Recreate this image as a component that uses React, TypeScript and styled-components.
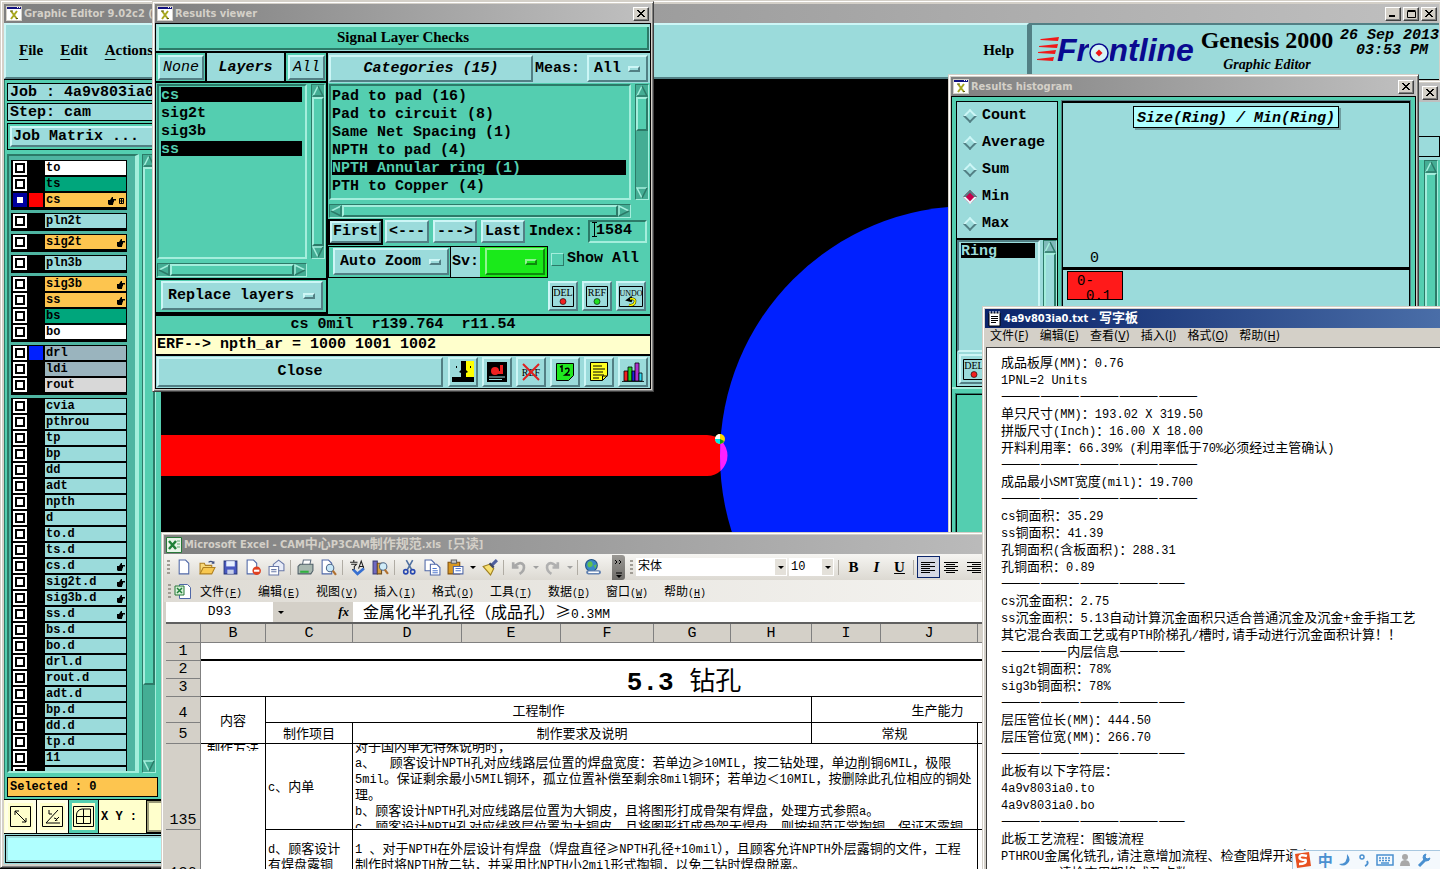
import React from "react";
import styled, { createGlobalStyle, css } from "styled-components";

const c = {
  teal: "#54ceb0",
  tealHi: "#a4eedc",
  tealLo: "#2c7a68",
  cyan: "#9bdbdb",
  cyanHi: "#cdf6f6",
  cyanLo: "#527f84",
  cream: "#ffffcc",
  orange: "#fdc54f",
  face: "#d4d0c8",
};

const mono = `"Liberation Mono", monospace`;
const serif = `"Liberation Serif", serif`;
const cjk = `"Noto Sans CJK SC", sans-serif`;
const title = `"DejaVu Sans Condensed", "DejaVu Sans", "Noto Sans CJK SC", sans-serif`;

const raisedTeal = css`
  border: 2px solid;
  border-color: ${c.tealHi} ${c.tealLo} ${c.tealLo} ${c.tealHi};
`;
const sunkenTeal = css`
  border: 2px solid;
  border-color: ${c.tealLo} ${c.tealHi} ${c.tealHi} ${c.tealLo};
`;
const raisedCyan = css`
  border: 2px solid;
  border-color: ${c.cyanHi} ${c.cyanLo} ${c.cyanLo} ${c.cyanHi};
`;

const Global = createGlobalStyle`
  *, *::before, *::after { box-sizing: border-box; }
  html, body { margin: 0; padding: 0; background: #000; }
  button, input, select, textarea { font: inherit; color: inherit; margin: 0; padding: 0; border-radius: 0; }
  button { white-space: nowrap; }
  a { color: inherit; text-decoration: none; }
`;

const Desktop = styled.main`
  position: relative;
  width: 100%;
  height: 100vh;
  overflow: hidden;
  background: #000;
  color: #000;
  font: bold 15px/18px ${mono};
`;

/* ---------- window chrome ---------- */

const Frame = styled.section<{ $l?: number; $t?: number; $r?: number; $b?: number; $w?: number; $h?: number; $pad?: number }>`
  position: absolute;
  left: ${(p) => (p.$l === undefined ? "auto" : p.$l + "px")};
  top: ${(p) => p.$t ?? 0}px;
  right: ${(p) => (p.$r === undefined ? "auto" : p.$r + "px")};
  bottom: ${(p) => (p.$b === undefined ? "auto" : p.$b + "px")};
  width: ${(p) => (p.$w ? p.$w + "px" : "auto")};
  height: ${(p) => (p.$h ? p.$h + "px" : "auto")};
  display: flex;
  flex-direction: column;
  padding: ${(p) => p.$pad ?? 2}px;
  background: ${c.face};
  border: 1px solid;
  border-color: ${c.face} #404040 #404040 ${c.face};
  box-shadow: inset 1px 1px #fff, inset -1px -1px #808080;
  overflow: hidden;
`;

const TitleBar = styled.header<{ $active?: boolean }>`
  flex: none;
  display: flex;
  align-items: center;
  gap: 2px;
  height: 19px;
  padding: 0 2px;
  background: ${(p) =>
    p.$active ? "linear-gradient(90deg, #0a246a, #4a6ea8)" : "linear-gradient(90deg, #808080, #c0c0c0)"};
  color: ${(p) => (p.$active ? "#fff" : c.face)};
  font: bold 11px/18px ${title};
  white-space: nowrap;
`;

const TitleText = styled.h2`
  flex: 1;
  margin: 0;
  font: inherit;
  overflow: hidden;
  & > span { font: bold 13px/0 ${cjk}; }
`;

const CaptionButton = styled.button`
  flex: none;
  display: flex;
  align-items: center;
  justify-content: center;
  width: 16px;
  height: 14px;
  background: ${c.face};
  border: 1px solid;
  border-color: #fff #404040 #404040 #fff;
  box-shadow: inset -1px -1px #808080;
`;

const XGlyph = () => (
  <svg width="8" height="7" viewBox="0 0 8 7" aria-hidden>
    <path d="M0 0h2v1h1v1h2V1h1V0h2v1H7v1H6v1H5v1h1v1h1v1h1v1H6V6H5V5H3v1H2v1H0V6h1V5h1V4h1V3H2V2H1V1H0z" fill="#000" />
  </svg>
);

const AppIcon = () => (
  <svg width="16" height="15" viewBox="0 0 16 15" aria-hidden>
    <path d="M0 0h16v15H0z" fill="#d4d0c8" />
    <path d="M1 3h14v11H1z" fill="#fff" />
    <path d="M1 1h14v2H1z" fill="#101080" />
    <path d="M11 1h1v1h-1zm2 0h1v1h-1z" fill="#fff" />
    <path d="M5 5l6 8M11 5l-6 8" stroke="#a8a820" strokeWidth="2" />
    <path d="M4 5h3M10 12.500h2" stroke="#606010" />
  </svg>
);

/* ---------- motif parts ---------- */

const MotifButton = styled.button<{ $slant?: boolean; $plain?: boolean; $grow?: boolean; $focus?: boolean }>`
  ${raisedCyan}
  flex: ${(p) => (p.$grow ? "1" : "none")};
  display: flex;
  align-items: center;
  justify-content: center;
  padding: 0 3px;
  background: ${c.cyan};
  font-style: ${(p) => (p.$slant ? "italic" : "normal")};
  font-weight: ${(p) => (p.$plain ? "normal" : "bold")};
  outline: ${(p) => (p.$focus ? "2px solid #000" : "none")};
  outline-offset: 0;
`;

const OptionFrame = styled.span<{ $green?: boolean; $w: number }>`
  ${raisedCyan}
  flex: none;
  display: flex;
  align-items: center;
  width: ${(p) => p.$w}px;
  padding: 0 6px 0 5px;
  background: ${(p) => (p.$green ? "#1aea1a" : c.cyan)};
  ${(p) => p.$green && "border-color: #8ff58f #0d8a0d #0d8a0d #8ff58f;"}
`;
const OptionSelect = styled.select`
  flex: 1;
  min-width: 0;
  appearance: none;
  border: 0;
  background: transparent;
  outline: none;
  font: bold 15px/18px ${mono};
`;
const Knob = styled.span<{ $green?: boolean }>`
  ${raisedCyan}
  flex: none;
  width: 12px;
  height: 6px;
  ${(p) => p.$green && "border-color: #8ff58f #0d8a0d #0d8a0d #8ff58f;"}
`;

function OptionMenu({ label, value, width, green }: { label: string; value: string; width: number; green?: boolean }) {
  return (
    <OptionFrame $w={width} $green={green}>
      <OptionSelect aria-label={label} defaultValue={value}>
        <option>{value}</option>
      </OptionSelect>
      <Knob $green={green} />
    </OptionFrame>
  );
}

const Track = styled.div<{ $h?: boolean; $cyan?: boolean }>`
  flex: none;
  display: flex;
  flex-direction: ${(p) => (p.$h ? "row" : "column")};
  ${(p) => (p.$h ? "height: 14px;" : "width: 14px;")}
  ${sunkenTeal}
  border-width: 1px;
  background: ${(p) => (p.$cyan ? "#7fb9bb" : "#44ad94")};
`;
const Thumb = styled.span<{ $cyan?: boolean; $size?: string }>`
  ${raisedTeal}
  flex: ${(p) => (p.$size ? `0 0 ${p.$size}` : "1")};
  background: ${(p) => (p.$cyan ? c.cyan : c.teal)};
`;
const Spacer = styled.span`
  flex: 1;
`;

const arrowPaths: Record<string, [string, string]> = {
  up: ["M6 1L1 11", "M6 1l5 10H1"],
  down: ["M11 1H1l5 10", "M6 11l5-10"],
  left: ["M11 1L1 6", "M1 6l10 5V1"],
  right: ["M1 11V1l10 5", "M11 6L1 11"],
};
function Arrow({ dir }: { dir: "up" | "down" | "left" | "right" }) {
  const [hi, lo] = arrowPaths[dir];
  return (
    <svg width="12" height="12" viewBox="0 0 12 12" fill="none" aria-hidden>
      <path d={hi} stroke={c.tealHi} strokeWidth="1.500" />
      <path d={lo} stroke={c.tealLo} strokeWidth="1.500" />
    </svg>
  );
}
function Scroll({ h, size, cyan }: { h?: boolean; size?: string; cyan?: boolean }) {
  return (
    <Track $h={h} $cyan={cyan}>
      <Arrow dir={h ? "left" : "up"} />
      <Thumb $size={size} $cyan={cyan} />
      {size && <Spacer />}
      <Arrow dir={h ? "right" : "down"} />
    </Track>
  );
}

/* ---------- editor main window ---------- */

const MenuRow = styled.div`
  flex: none;
  display: flex;
  height: 57px;
  background: ${c.cyan};
  border-bottom: 1px solid #000;
`;
const MenuBar = styled.nav`
  ${raisedCyan}
  flex: 1;
  display: flex;
  align-items: center;
  gap: 17px;
  padding: 0 13px 2px;
  background: ${c.cyan};
  font: bold 15px/18px ${serif};
  & u { text-underline-offset: 4px; }
`;
const MenuLink = styled.a`
  white-space: nowrap;
`;
const HelpLink = styled.a`
  margin-left: auto;
`;
const Brand = styled.div`
  flex: 0 0 410px;
  display: flex;
  align-items: flex-start;
  border-left: 3px solid ${c.cyanLo};
  border-top: 2px solid ${c.cyanLo};
  padding: 0 0 0 5px;
  & > svg { flex: none; margin-top: 4px; }
`;
const Product = styled.div`
  flex: none;
  width: 136px;
  text-align: center;
  font: bold 24px/30px ${serif};
  white-space: nowrap;
`;
const ProductSub = styled.div`
  font: italic bold 14px/20px ${serif};
`;
const Clock = styled.div`
  flex: none;
  width: 99px;
  margin-left: 5px;
  font: italic bold 15px/15px ${mono};
  text-align: right;
  white-space: nowrap;
  padding-top: 3px;
  & > span { display: block; padding-right: 11px; }
`;

const EditorBody = styled.div`
  flex: 1;
  min-height: 0;
  display: flex;
  background: #000;
`;
const Side = styled.aside`
  flex: 0 0 157px;
  display: flex;
  flex-direction: column;
  gap: 2px;
  padding: 3px 3px 2px 2px;
  background: ${c.teal};
  border-left: 1px solid ${c.tealLo};
  overflow: hidden;
`;
const InfoBox = styled.div<{ $orange?: boolean }>`
  flex: none;
  height: ${(p) => (p.$orange ? 20 : 18)}px;
  padding-left: 2px;
  border: 1px solid #000;
  background: ${(p) => (p.$orange ? c.orange : c.cyan)};
  font: bold ${(p) => (p.$orange ? "12px/18px" : "15px/17px")} ${mono};
  white-space: nowrap;
  overflow: hidden;
`;
const MatrixBox = styled.div`
  flex: none;
  display: flex;
  height: 27px;
  padding: 2px;
  border: 1px solid #000;
  & > button { justify-content: flex-start; padding: 0 1px; }
`;
const LayerArea = styled.div`
  flex: 1;
  min-height: 0;
  display: flex;
  gap: 3px;
  margin: 2px 0;
`;
const LayerPane = styled.ul`
  flex: none;
  display: flex;
  flex-direction: column;
  gap: 3px;
  width: 132px;
  height: 100%;
  margin: 0;
  padding: 4px 8px 0 2px;
  list-style: none;
  background: #4fb5a2;
  ${sunkenTeal}
  border-right-width: 4px;
  overflow: hidden;
`;
const LayerGroup = styled.li`
  flex: none;
  display: flex;
  flex-direction: column;
  gap: 2px;
  padding: 1px 1px 3px 2px;
  background: #000;
`;
const LayerRow = styled.label`
  display: flex;
  align-items: center;
  gap: 2px;
  height: 14px;
`;
const LayerCheck = styled.input`
  appearance: none;
  flex: none;
  width: 14px;
  height: 14px;
  background: #fff;
  border: 2px solid #fff;
  box-shadow: inset 0 0 0 2px #000;
  &:checked { border-color: #0000a0; box-shadow: inset 0 0 0 2px #0000a0; }
`;
const Swatch = styled.span<{ $color: string }>`
  flex: none;
  width: 14px;
  height: 14px;
  background: ${(p) => p.$color};
`;
const LayerName = styled.span<{ $color: string }>`
  flex: 1;
  display: flex;
  align-items: center;
  justify-content: space-between;
  height: 14px;
  padding: 0 1px;
  background: ${(p) => p.$color};
  font: bold 12px/14px ${mono};
`;

const Hand = ({ grid }: { grid?: boolean }) => (
  <svg width={grid ? 18 : 9} height="9" viewBox={grid ? "0 0 18 9" : "0 0 9 9"} aria-hidden>
    <path d="M1 4h2l2-3 1 0v2h3v1.500H7V6H6.500v1.500H6V9H2L1 8z" fill="#000" />
    {grid && <path d="M12.500 2.500h4v5h-4zM14.500 2.500v5M12.500 5h4" stroke="#000" fill="none" />}
  </svg>
);

type Layer = { n: string; bg?: string; sw?: string; hand?: boolean; on?: boolean };
const green = "#00a67c";
const groups: Layer[][] = [
  [{ n: "to", bg: "#fff" }, { n: "ts", bg: green }, { n: "cs", bg: c.orange, sw: "#f00", hand: true, on: true }],
  [{ n: "pln2t" }],
  [{ n: "sig2t", bg: c.orange, hand: true }],
  [{ n: "pln3b" }],
  [
    { n: "sig3b", bg: c.orange, hand: true },
    { n: "ss", bg: c.orange, hand: true },
    { n: "bs", bg: green },
    { n: "bo", bg: "#fff" },
  ],
  [{ n: "drl", bg: "#9ab4be", sw: "#0020ff" }, { n: "ldi", bg: "#9ab4be" }, { n: "rout", bg: "#d8d8d8" }],
  [
    ..."cvia pthrou tp bp dd adt npth d to.d ts.d".split(" ").map((n) => ({ n })),
    ..."cs.d sig2t.d sig3b.d ss.d".split(" ").map((n) => ({ n, hand: true })),
    ..."bs.d bo.d drl.d rout.d adt.d bp.d dd.d tp.d 11".split(" ").map((n) => ({ n })),
    { n: "" },
  ],
];

const CanvasArea = styled.div`
  flex: 1;
  min-width: 0;
  overflow: hidden;
  & > svg { display: block; }
`;
const RightPane = styled.div`
  flex: 0 0 488px;
  background: ${c.teal};
`;
const ToolRow = styled.div`
  flex: none;
  display: flex;
  align-items: stretch;
  height: 35px;
  padding-left: 1px;
  background: ${c.cream};
  border: 1px solid #000;
  border-width: 1px 0;
`;
const SnapButton = styled.button<{ $on?: boolean }>`
  flex: none;
  display: flex;
  align-items: center;
  justify-content: center;
  width: ${(p) => (p.$on ? 30 : 32)}px;
  background: ${c.cream};
  border: 0;
  border-right: 1px solid #000;
  box-shadow: ${(p) => (p.$on ? "inset 0 0 0 3px " + c.teal : "inset 0 0 0 3px #ffffe8")};
  & > svg { flex: none; }
`;
const XY = styled.label`
  display: flex;
  align-items: center;
  gap: 10px;
  padding-left: 2px;
  font: bold 12px/14px ${mono};
  white-space: nowrap;
`;
const XYInput = styled.input`
  width: 160px;
  height: 31px;
  background: ${c.cream};
  border: 2px solid #9a9a78;
  outline: 1px solid #000;
`;
const CommandLine = styled.input`
  flex: none;
  width: 100%;
  height: 30px;
  background: #b0ffff;
  border: 4px solid ${c.cyan};
  outline: 1px solid #000;
  outline-offset: -2px;
`;

const LogoDrawing = () => (
  <svg width="162" height="36" viewBox="0 0 162 36" role="img" aria-label="Frontline">
    <g fill="#f01818">
      <path d="M4 10L22 8l-1 4-18-1z" />
      <path d="M2 17l19-2-1 4-18-1z" />
      <path d="M1 23l18-2-1 4-17-1z" />
      <path d="M0 30l17-2-1 4-16-1z" />
    </g>
    <text x="20" y="32" fill="#0a0a90" fontFamily="Liberation Sans" fontWeight="bold" fontStyle="italic" fontSize="32">
      Frontline
    </text>
    <path d="M52 14h21v20H52z" fill="#9bdbdb" />
    <circle cx="62" cy="24" r="9" fill="#d8f6f6" stroke="#0a0a90" strokeWidth="1.500" />
    <path d="M62 20.500l3.500 3.500-3.500 3.500-3.500-3.500z" fill="#f01818" />
  </svg>
);

function LayerList() {
  return (
    <LayerPane>
      {groups.map((g, i) => (
        <LayerGroup key={i}>
          {g.map((l) => (
            <LayerRow key={l.n}>
              <LayerCheck type="checkbox" defaultChecked={l.on} aria-label={l.n || "layer"} />
              <Swatch $color={l.sw ?? "#000"} />
              <LayerName $color={l.bg ?? c.cyan}>
                {l.n}
                {l.hand && <Hand grid={l.on} />}
              </LayerName>
            </LayerRow>
          ))}
        </LayerGroup>
      ))}
    </LayerPane>
  );
}

function Editor() {
  return (
    <Frame $l={0} $r={-3} $t={0} $b={1} $pad={3}>
      <TitleBar>
        <AppIcon />
        <TitleText>Graphic Editor 9.02c2 (</TitleText>
        <CaptionButton aria-label="Minimize">
          <svg width="8" height="7" aria-hidden><path d="M0 5h6v2H0z" /></svg>
        </CaptionButton>
        <CaptionButton aria-label="Maximize">
          <svg width="9" height="8" aria-hidden><path d="M.5 1.500h8v6h-8zM.5.5h8" fill="none" stroke="#000" /></svg>
        </CaptionButton>
        <CaptionButton aria-label="Close editor"><XGlyph /></CaptionButton>
      </TitleBar>
      <MenuRow>
        <MenuBar>
          <MenuLink href="#file"><u>F</u>ile</MenuLink>
          <MenuLink href="#edit"><u>E</u>dit</MenuLink>
          <MenuLink href="#actions"><u>A</u>ctions</MenuLink>
          <HelpLink href="#help">Help</HelpLink>
        </MenuBar>
        <Brand>
          <LogoDrawing />
          <Product>
            Genesis 2000
            <ProductSub>Graphic Editor</ProductSub>
          </Product>
          <Clock>
            26 Sep 2013<span>03:53 PM</span>
          </Clock>
        </Brand>
      </MenuRow>
      <EditorBody>
        <Side>
          <InfoBox>Job : 4a9v803ia0</InfoBox>
          <InfoBox>Step: cam</InfoBox>
          <MatrixBox>
            <MotifButton $grow>Job Matrix ...</MotifButton>
          </MatrixBox>
          <LayerArea>
            <LayerList />
            <Scroll size="518px" />
          </LayerArea>
          <InfoBox $orange>Selected : 0</InfoBox>
        </Side>
        <CanvasArea>
          <svg width="790" height="790" viewBox="161 80 790 790" role="img" aria-label="Board view">
            <defs>
              <clipPath id="pad"><circle cx="970" cy="456" r="250" /></clipPath>
            </defs>
            <path d="M161 435h546a20.500 20.500 0 0 1 0 41H161z" fill="#f00" />
            <circle cx="970" cy="456" r="250" fill="#0020ff" />
            <path clipPath="url(#pad)" d="M161 435h546a20.500 20.500 0 0 1 0 41H161z" fill="#ff20ff" />
            <circle cx="720" cy="439" r="5" fill="#ffd800" />
            <path d="M720 439v-5a5 5 0 0 0-5 5z" fill="#fff" />
            <path d="M720 439h-5a5 5 0 0 0 5 5z" fill="#00e8e8" />
            <path d="M720 439v5a5 5 0 0 0 4-3z" fill="#10a010" />
          </svg>
        </CanvasArea>
        <RightPane />
      </EditorBody>
      <ToolRow>
        <SnapButton aria-label="Snap off">
          <svg width="21" height="21" fill="none" stroke="#000" aria-hidden>
            <path d="M.5.5h20v20H.5zM5 5l11 11M5 9V5h4M12 16h4v-4" />
          </svg>
        </SnapButton>
        <SnapButton aria-label="Snap angle">
          <svg width="21" height="21" fill="none" stroke="#000" aria-hidden>
            <path d="M.5.5h20v20H.5zM4 17L16 4M4 17h14M7 4v4h3M12 12q3 0 3 3M13 15l4-4" />
          </svg>
        </SnapButton>
        <SnapButton $on aria-label="Snap grid">
          <svg width="21" height="21" fill="none" stroke="#000" aria-hidden>
            <path d="M.5.5h20v20H.5zM9 3h8.500v14.500h-14V9A6 6 0 0 1 9 3zM3 10.500h15M10.500 3v15" />
          </svg>
        </SnapButton>
        <XY>
          X Y :
          <XYInput />
        </XY>
      </ToolRow>
      <CommandLine aria-label="Command" />
    </Frame>
  );
}

/* ---------- window behind the histogram ---------- */

const PopupBody = styled.div`
  flex: 1;
  display: flex;
  flex-direction: column;
  background: ${c.cyan};
`;
const PopupField = styled.div`
  height: 21px;
  margin: 34px 0 3px;
  border: 1px solid #000;
`;
const PopupScroll = styled.div`
  flex: 1;
  display: flex;
  justify-content: flex-end;
  padding: 0 2px 0;
  background: ${c.teal};
`;

/* ---------- results viewer ---------- */

const ViewerBody = styled.div`
  display: flex;
  flex-direction: column;
  gap: 2px;
  background: #000;
  padding: 1px;
`;
const Banner = styled.h3`
  margin: 0;
  height: 27px;
  border: 1px solid ${c.cyan};
  background: ${c.teal};
  box-shadow: inset 2px 2px ${c.tealHi}, inset -2px -2px ${c.tealLo};
  font: bold 15px/25px ${serif};
  text-align: center;
`;
const Columns = styled.div`
  display: flex;
  gap: 2px;
`;
const LeftCol = styled.div`
  flex: 0 0 170px;
  display: flex;
  flex-direction: column;
  gap: 2px;
`;
const HeadRow = styled.div`
  display: flex;
  gap: 2px;
  height: 28px;
`;
const HeadCell = styled.div`
  display: flex;
  padding: 2px 1px 1px 2px;
  background: ${c.teal};
`;
const HeadLabel = styled.div`
  flex: 1;
  background: ${c.cyan};
  font: italic bold 15px/30px ${mono};
  text-align: center;
`;
const ListBlock = styled.div<{ $h: number }>`
  display: flex;
  flex-direction: column;
  gap: 4px;
  height: ${(p) => p.$h}px;
  padding: 1px;
  background: ${c.teal};
`;
const ListRow = styled.div`
  flex: 1;
  min-height: 0;
  display: flex;
  gap: 4px;
`;
const BottomScroll = styled.div`
  padding-right: 18px;
`;
const PickList = styled.ul`
  ${sunkenTeal}
  flex: 1;
  display: flex;
  flex-direction: column;
  gap: 3px;
  margin: 0;
  padding: 2px 3px 0 1px;
  list-style: none;
  overflow: hidden;
`;
const LayerPick = styled(PickList)`
  padding: 1px 3px 0 2px;
`;
const PickItem = styled.li<{ $sel?: boolean; $cyan?: boolean }>`
  height: 15px;
  line-height: 17px;
  background: ${(p) => (p.$sel ? "#000" : "transparent")};
  color: ${(p) => (p.$sel ? (p.$cyan ? c.cyan : c.teal) : "#000")};
  white-space: nowrap;
`;
const ReplaceBox = styled.div`
  display: flex;
  height: 32px;
  padding: 1px 2px 2px 5px;
  background: ${c.teal};
`;
const RightCol = styled.div`
  flex: 1;
  min-width: 0;
  display: flex;
  flex-direction: column;
  background: ${c.teal};
`;
const CatRow = styled.div`
  display: flex;
  height: 30px;
  padding: 2px 2px 1px 1px;
  background: ${c.cyan};
  & > button { flex: 1; }
`;
const MeasLabel = styled.span`
  padding: 0 7px 0 2px;
  line-height: 28px;
`;
const NavRow = styled.div`
  display: flex;
  align-items: center;
  gap: 4px;
  height: 27px;
  padding: 0 3px 2px 2px;
  & > button { height: 23px; padding: 0 2px; }
  & > button:first-child { padding: 0 1px; height: 22px; }
`;
const IndexLabel = styled.label`
  position: relative;
  flex: 1;
  display: flex;
  align-items: center;
  gap: 5px;
  & > svg { position: absolute; left: 63px; top: 2px; }
`;
const IndexInput = styled.input`
  ${sunkenTeal}
  flex: 1;
  width: 20px;
  height: 23px;
  padding: 0 0 3px 6px;
  background: ${c.teal};
  font: bold 15px/18px ${mono};
`;
const ZoomRow = styled.div`
  display: flex;
  height: 32px;
`;
const ZoomBox = styled.div`
  display: flex;
  padding: 1px 1px 2px 4px;
  border: 1px solid #000;
`;
const SvBox = styled.div`
  display: flex;
  background: #1aea1a;
  border: 1px solid #000;
  border-left: 0;
  & > span:first-child { padding: 0 1px; background: ${c.cyan}; line-height: 30px; }
  & > span:last-child { margin: 1px 2px 2px 5px; }
`;
const ShowAll = styled.label`
  display: flex;
  align-items: center;
  gap: 3px;
  height: 26px;
  padding-left: 3px;
  white-space: nowrap;
`;
const ShowCheck = styled.input`
  ${raisedTeal}
  border-width: 1px;
  appearance: none;
  width: 13px;
  height: 13px;
`;
const ActionRow = styled.div`
  display: flex;
  justify-content: flex-end;
  gap: 4px;
  height: 36px;
  padding: 3px 4px;
`;
const IconButton = styled.button`
  ${raisedCyan}
  flex: none;
  display: flex;
  align-items: center;
  justify-content: center;
  width: 30px;
  height: 30px;
  background: ${c.cyan};
`;
const StatusBar = styled.div`
  height: 18px;
  background: ${c.teal};
  line-height: 18px;
  text-align: center;
  white-space: pre;
`;
const ErfBar = styled.div`
  height: 18px;
  padding-left: 1px;
  background: ${c.cream};
  line-height: 18px;
`;
const CloseRow = styled.div`
  display: flex;
  gap: 4px;
  padding: 1px 2px 1px 1px;
  background: ${c.cyan};
  & > button:first-child { margin-right: 1px; }
`;

const LabelIcon = ({ text, dot, cross, undo }: { text: string; dot?: string; cross?: boolean; undo?: boolean }) => (
  <svg width="24" height="24" viewBox="0 0 24 24" aria-hidden>
    {!cross && <path d={undo ? "M.5 2.500h23v20H.5z" : "M1.500 2.500h21v20h-21z"} fill="none" stroke="#000" />}
    <text x="12" y={cross ? 16 : 12} textAnchor="middle" fontFamily="Liberation Serif" fontSize={undo ? 8 : 10} fontWeight="normal">
      {text}
    </text>
    {dot && <circle cx="12" cy="17.500" r="3" fill={dot} stroke="#000" strokeWidth=".6" />}
    {cross && <path d="M4 4l16 16M20 4L4 20" stroke="#e02020" strokeWidth="2" />}
    {undo && <path d="M13 13l-4 3 4 1M11 15q6-1 5 3t-6 3" fill="none" stroke="#000" strokeWidth="2.500" />}
    {undo && <path d="M11 15q6-1 5 3t-6 3" fill="none" stroke="#ff0" strokeWidth="1.500" />}
  </svg>
);

const toolIcons: [string, React.ReactNode][] = [
  ["Compare", <g key="a"><path d="M0 0h11v16H0z" fill="#9bdbdb" /><path d="M12 0h10v21H12z" fill="#ff0" /><path d="M9 0h5v9l2 2-2 1v4h8v5H0v-5h9v-4l-2-1 2-2z" /><path d="M4 5h1v2H4zM18 5h1v2h-1z" /></g>],
  ["Record", <g key="b"><path d="M1 1h20v20H1z" /><circle cx="9" cy="10" r="4" fill="#f02020" /><path d="M12 10h2V4h3v9h-5z" fill="#f02020" /><path d="M3 16h16M3 18.500h13" stroke="#9bdbdb" /></g>],
  ["", null],
  ["Numbers", <g key="d"><path d="M2.500 2.500h17v12l-5 5h-12z" fill="#20e820" stroke="#000" /><path d="M6 6l2-1v6M11 8q4-2 4 1 0 2-4 5h5" fill="none" stroke="#000" strokeWidth="1.500" /></g>],
  ["Notes", <g key="e"><path d="M2.500 1.500h17v13l-5 5h-12z" fill="#ffff20" stroke="#000" /><path d="M5 5h9M5 8h12M5 11h10M5 14h11M5 17h6M14.500 19v-4h5" stroke="#000" fill="none" /></g>],
  ["Histogram", <g key="f" stroke="#000" strokeWidth=".8"><path d="M2 10h4v10H2z" fill="#f02020" /><path d="M6 6h4v14H6z" fill="#20d020" /><path d="M10 10h3v10h-3z" fill="#2020e0" /><path d="M13 2h4v18h-4z" fill="#b030d0" /><path d="M17 12h3v8h-3z" fill="#30d8f0" /><path d="M0 20.500h22" /></g>],
];

function ResultsViewer() {
  const cats = ["Pad to pad (16)", "Pad to circuit (8)", "Same Net Spacing (1)", "NPTH to pad (4)", "NPTH Annular ring (1)", "PTH to Copper (4)"];
  return (
    <Frame $l={152} $t={1} $w={502}>
      <TitleBar>
        <AppIcon />
        <TitleText>Results viewer</TitleText>
        <CaptionButton aria-label="Close results viewer"><XGlyph /></CaptionButton>
      </TitleBar>
      <ViewerBody>
        <Banner>Signal Layer Checks</Banner>
        <Columns>
          <LeftCol>
            <HeadRow>
              <HeadCell><MotifButton $slant $plain>None</MotifButton></HeadCell>
              <HeadLabel>Layers</HeadLabel>
              <HeadCell><MotifButton $slant $plain>All</MotifButton></HeadCell>
            </HeadRow>
            <ListBlock $h={195}>
              <ListRow>
                <LayerPick>
                  <PickItem $sel>cs</PickItem>
                  <PickItem>sig2t</PickItem>
                  <PickItem>sig3b</PickItem>
                  <PickItem $sel>ss</PickItem>
                </LayerPick>
                <Scroll />
              </ListRow>
              <BottomScroll><Scroll h /></BottomScroll>
            </ListBlock>
            <ReplaceBox>
              <OptionMenu label="Layer mode" value="Replace layers" width={162} />
            </ReplaceBox>
          </LeftCol>
          <RightCol>
            <CatRow>
              <MotifButton $slant>Categories (15)</MotifButton>
              <MeasLabel>Meas:</MeasLabel>
              <OptionMenu label="Measurements" value="All" width={61} />
            </CatRow>
            <ListBlock $h={136}>
              <ListRow>
                <PickList>
                  {cats.map((t) => (
                    <PickItem key={t} $sel={t.includes("Annular")}>{t}</PickItem>
                  ))}
                </PickList>
                <Scroll size="34px" />
              </ListRow>
              <BottomScroll><Scroll h /></BottomScroll>
            </ListBlock>
            <NavRow>
              <MotifButton $focus>First</MotifButton>
              <MotifButton>&lt;---</MotifButton>
              <MotifButton>---&gt;</MotifButton>
              <MotifButton>Last</MotifButton>
              <IndexLabel>
                Index:
                <IndexInput defaultValue="1584" />
                <svg width="5" height="15" viewBox="0 0 5 15" fill="none" stroke="#000" aria-hidden>
                  <path d="M0 .5h5M2.500 0v15M0 14.500h5" />
                </svg>
              </IndexLabel>
            </NavRow>
            <ZoomRow>
              <ZoomBox><OptionMenu label="Zoom mode" value="Auto Zoom" width={116} /></ZoomBox>
              <SvBox>
                <span>Sv:</span>
                <OptionMenu label="Severity" value="" width={60} green />
              </SvBox>
              <ShowAll><ShowCheck type="checkbox" />Show All</ShowAll>
            </ZoomRow>
            <ActionRow>
              <IconButton aria-label="Delete"><LabelIcon text="DEL" dot="#f02020" /></IconButton>
              <IconButton aria-label="Reference"><LabelIcon text="REF" dot="#20e020" /></IconButton>
              <IconButton aria-label="Undo"><LabelIcon text="UNDO" undo /></IconButton>
            </ActionRow>
          </RightCol>
        </Columns>
        <StatusBar>{"cs 0mil  r139.764  r11.54"}</StatusBar>
        <ErfBar>ERF--&gt; npth_ar = 1000 1001 1002</ErfBar>
        <CloseRow>
          <MotifButton $grow>Close</MotifButton>
          {toolIcons.map(([n, g], i) =>
            g ? (
              <IconButton key={i} aria-label={n}>
                <svg width="22" height="22" viewBox="0 0 22 22" aria-hidden>{g}</svg>
              </IconButton>
            ) : (
              <IconButton key={i} aria-label="Clear reference"><LabelIcon text="REF" cross /></IconButton>
            )
          )}
        </CloseRow>
      </ViewerBody>
    </Frame>
  );
}

/* ---------- histogram ---------- */

const HistBody = styled.div`
  flex: 1;
  display: flex;
  flex-direction: column;
  background: ${c.teal};
  border: 1px solid #000;
`;
const HistTop = styled.div`
  flex: none;
  display: flex;
  gap: 4px;
  height: 292px;
  padding: 4px 5px 0 4px;
  border-bottom: 2px solid ${c.tealHi};
`;
const HistSide = styled.div`
  flex: 0 0 102px;
  display: flex;
  flex-direction: column;
  background: ${c.cyan};
  border: 1px solid #000;
`;
const Radios = styled.fieldset`
  margin: 0;
  padding: 0 0 1px 6px;
  border: 0;
  border-bottom: 2px solid #000;
`;
const RadioLine = styled.label`
  display: flex;
  align-items: center;
  gap: 7px;
  height: 27px;
`;
const Diamond = styled.input`
  appearance: none;
  width: 10px;
  height: 10px;
  margin: 0 0 0 2px;
  transform: rotate(45deg);
  border: 2px solid;
  border-color: ${c.cyanHi} ${c.cyanLo} ${c.cyanLo} ${c.cyanHi};
  &:checked { background: #c8004c; border-color: ${c.cyanLo} #e8fafa #e8fafa ${c.cyanLo}; }
`;
const RingRow = styled.div`
  flex: none;
  display: flex;
  gap: 3px;
  height: 112px;
`;
const RingList = styled(PickList)`
  padding-top: 1px;
  padding-left: 2px;
  border-color: ${c.cyanLo} ${c.cyanHi} ${c.cyanHi} ${c.cyanLo};
`;
const DelBox = styled.div`
  padding: 2px;
`;
const Chart = styled.div`
  flex: 1;
  display: flex;
  flex-direction: column;
  align-items: center;
  background: ${c.cyan};
  border: 1px solid #000;
  border-top-width: 2px;
  outline: 1px solid ${c.cyanLo};
  outline-offset: 0;
`;
const ChartTitle = styled.div`
  margin-top: 3px;
  height: 22px;
  padding: 0 3px;
  border: 1px solid #000;
  background: #b0ffff;
  box-shadow: 2px 2px #6f9d9f;
  font: italic bold 15px/24px ${mono};
`;
const Axis = styled.div`
  width: 100%;
  margin-top: auto;
  border-bottom: 3px solid #000;
  padding-left: 27px;
  line-height: 16px;
  font-weight: normal;
`;
const BinBox = styled.div`
  align-self: flex-start;
  width: 56px;
  height: 29px;
  margin: 1px 0 86px 4px;
  padding-left: 9px;
  border: 1px solid #000;
  background: #ff1a1a;
  font: normal 14px/15px ${mono};
  padding-top: 2px;
  & > span { display: block; padding-left: 9px; }
`;
const HistLower = styled.div`
  flex: 1;
  margin: 4px 0 0 3px;
  border: 2px solid ${c.tealLo};
  outline: 1px solid #000;
  outline-offset: -2px;
`;

function Histogram() {
  return (
    <Frame $l={948} $t={74} $w={471} $h={800}>
      <TitleBar>
        <AppIcon />
        <TitleText>Results histogram</TitleText>
        <CaptionButton aria-label="Close histogram"><XGlyph /></CaptionButton>
      </TitleBar>
      <HistBody>
        <HistTop>
          <HistSide>
            <Radios aria-label="Statistic">
              {["Count", "Average", "Sum", "Min", "Max"].map((t) => (
                <RadioLine key={t}>
                  <Diamond type="radio" name="stat" defaultChecked={t === "Min"} />
                  {t}
                </RadioLine>
              ))}
            </Radios>
            <RingRow>
              <RingList><PickItem $sel $cyan>Ring</PickItem></RingList>
              <Scroll cyan />
            </RingRow>
            <DelBox>
              <IconButton aria-label="Delete bin"><LabelIcon text="DEL" dot="#f02020" /></IconButton>
            </DelBox>
          </HistSide>
          <Chart>
            <ChartTitle>Size(Ring) / Min(Ring)</ChartTitle>
            <Axis>0</Axis>
            <BinBox>0-<span>0.1</span></BinBox>
          </Chart>
        </HistTop>
        <HistLower />
      </HistBody>
    </Frame>
  );
}

/* ---------- mixed Chinese / Latin text ---------- */

const Latin = styled.span<{ $size: number; $bold?: boolean }>`
  font: ${(p) => (p.$bold ? "bold" : "normal")} ${(p) => p.$size}px/0 ${mono};
`;
const Dashes = styled.span`
  font: normal 16px/0 ${cjk};
`;
function Mixed({ text, size = 12, bold }: { text: string; size?: number; bold?: boolean }) {
  return (
    <>
      {text.split(/([\x20-\x7e]+|—+)/).map((s, i) =>
        i % 2 === 0 ? s : s[0] === "—" ? <Dashes key={i}>{s}</Dashes> : <Latin key={i} $size={size} $bold={bold}>{s}</Latin>
      )}
    </>
  );
}

/* ---------- spreadsheet ---------- */

const SheetTools = styled.div`
  flex: none;
  display: flex;
  align-items: center;
  height: 26px;
  padding-left: 2px;
  background: linear-gradient(#f6f5f2, #dcd9d2);
`;
const Grip = styled.span`
  flex: none;
  width: 3px;
  height: 14px;
  margin: 0 3px 0 1px;
  background: repeating-linear-gradient(#a09c94 0 2px, transparent 2px 4px);
`;
const SheetButton = styled.button<{ $on?: boolean; $w?: number }>`
  flex: none;
  display: flex;
  align-items: center;
  justify-content: center;
  width: ${(p) => p.$w ?? 23}px;
  height: 22px;
  background: ${(p) => (p.$on ? "#d5d8e4" : "transparent")};
  border: ${(p) => (p.$on ? "1px solid #0a246a" : "0")};
  font: bold 15px/18px ${serif};
  & > em { font-style: italic; }
`;
const Sep = styled.span`
  flex: none;
  width: 1px;
  height: 15px;
  margin: 0 3px 0 2px;
  background: #b0aca4;
`;
const More = styled.button`
  flex: none;
  display: flex;
  align-items: flex-end;
  justify-content: center;
  width: 13px;
  height: 25px;
  margin: 0 4px 0 8px;
  border: 0;
  border-radius: 0 3px 3px 0;
  background: linear-gradient(#9a9894, #6e6c68);
`;
const Combo = styled.span<{ $w: number }>`
  flex: none;
  display: flex;
  align-items: center;
  width: ${(p) => p.$w}px;
  height: 18px;
  margin-right: 2px;
  background: #fff;
  & > svg { flex: none; width: 11px; height: 16px; background: #e4e1da; margin-right: 1px; }
`;
const ComboSelect = styled.select`
  flex: 1;
  min-width: 0;
  appearance: none;
  border: 0;
  background: transparent;
  padding-left: 2px;
  font: normal 12px/16px "Liberation Mono", "Noto Sans CJK SC", sans-serif;
`;
const SheetMenu = styled.nav`
  flex: none;
  display: flex;
  align-items: center;
  height: 22px;
  padding-left: 3px;
  background: linear-gradient(90deg, #dedbd4, #f6f5f2);
  font: normal 12px/16px ${cjk};
  & > a { flex: none; width: 58px; white-space: nowrap; }
  & > svg { margin-right: 9px; }
`;
const FormulaRow = styled.div`
  flex: none;
  display: flex;
  align-items: stretch;
  height: 20px;
  padding-left: 2px;
  background: ${c.face};
`;
const NameBox = styled.input`
  width: 107px;
  padding-left: 0;
  border: 0;
  background: #fff;
  text-align: center;
  font: normal 13px/18px ${mono};
`;
const FormulaTools = styled.span`
  flex: 0 0 80px;
  display: flex;
  align-items: center;
  justify-content: space-between;
  padding: 0 4px 0 3px;
  font: italic bold 13px/16px ${serif};
`;
const Formula = styled.div`
  flex: 1;
  padding-left: 10px;
  background: #fff;
  font: normal 16px/18px ${cjk};
  white-space: nowrap;
`;
const SheetArea = styled.div`
  flex: 1;
  overflow: hidden;
  margin-left: 2px;
  background: #fff;
  border-top: 2px solid #606060;
`;
const Grid = styled.table`
  width: 898px;
  table-layout: fixed;
  border-collapse: separate;
  border-spacing: 0;
  font: normal 13px/16px ${cjk};
`;
const HeadTh = styled.th`
  height: 19px;
  padding: 2px 0 0;
  background: ${c.face};
  border-right: 1px solid #808080;
  border-bottom: 1px solid #808080;
  font: normal 15px/16px ${mono};
  overflow: hidden;
`;
const RowTh = styled(HeadTh)<{ $h: number }>`
  height: ${(p) => p.$h}px;
  padding: 0;
  vertical-align: bottom;
`;
const Cell = styled.td<{ $left?: boolean; $thick?: boolean; $none?: boolean }>`
  padding: 0 0 0 ${(p) => (p.$left ? 2 : 0)}px;
  border-right: ${(p) => (p.$none ? 0 : 1)}px solid #000;
  border-bottom: ${(p) => (p.$thick ? 2 : 1)}px solid #000;
  text-align: ${(p) => (p.$left ? "left" : "center")};
`;
const Clip = styled.div<{ $h: number; $mid?: boolean }>`
  display: flex;
  flex-direction: column;
  justify-content: ${(p) => (p.$mid ? "center" : "flex-start")};
  height: ${(p) => p.$h}px;
  overflow: hidden;
  white-space: nowrap;
  & > span { flex: none; display: block; height: 16px; }
`;
const CutTop = styled.div<{ $h: number }>`
  display: flex;
  flex-direction: column;
  justify-content: center;
  height: ${(p) => p.$h}px;
  overflow: hidden;
  white-space: pre;
  & > span { flex: none; height: 16px; }
`;
const SheetTitle = styled.div`
  padding-left: 104px;
  font: normal 26px/34px ${cjk};
`;

const Caret = () => (
  <svg width="9" height="16" viewBox="0 0 9 16" aria-hidden><path d="M2 7h6L5 10z" fill="#000" /></svg>
);
const Icon16 = ({ children }: { children: React.ReactNode }) => (
  <svg width="17" height="17" viewBox="0 0 16 16" aria-hidden>{children}</svg>
);
const Page = ({ x = 3, y = 1, w = 9, h = 13 }) => (
  <path d={`M${x} ${y}h${w - 3}l3 3v${h - 3}h-${w}z`} fill="#fff" stroke="#5068a8" />
);

const bar: (string | [string, React.ReactNode])[] = [
  ["New", <Page key="0" />],
  ["Open", <g key="1"><path d="M1 14V4h4l1 2h6v3" fill="#f8d878" stroke="#b08020" /><path d="M1 14l3-6h11l-3 6z" fill="#f8c850" stroke="#b08020" /><path d="M9 3q3-2 5 1m0-2v2h-2" fill="none" stroke="#405080" /></g>],
  ["Save", <g key="2"><path d="M2 2h12v12H2z" fill="#4858c0" stroke="#283880" /><path d="M4 2h8v5H4z" fill="#e8f0ff" /><path d="M5 10h6v4H5z" fill="#c8d0e8" /></g>],
  ["Permission", <g key="3"><Page x={2} /><circle cx="11" cy="11" r="4" fill="#e04020" /><path d="M8.500 11h5" stroke="#fff" strokeWidth="2" /></g>],
  ["Mail", <g key="4"><path d="M5 5l5-4 5 4v6H5z" fill="#e8ecf8" stroke="#6878a8" /><path d="M1 7h9v8H1z" fill="#fff" stroke="#6878a8" /><path d="M3 10h5M3 12h5" stroke="#6878a8" /></g>],
  "sep",
  ["Print", <g key="5"><path d="M5 6l1-5h7l-1 5" fill="#fff" stroke="#607080" /><path d="M1 7l2-2h12v6l-2 3H1z" fill="#a8b8b0" stroke="#506068" /><path d="M3 11h8v2H3z" fill="#30b040" /></g>],
  ["Preview", <g key="6"><Page x={2} /><circle cx="9.500" cy="8.500" r="3.500" fill="#c8e8f8" stroke="#506888" /><path d="M12 11l3 4" stroke="#b07030" strokeWidth="2" /></g>],
  "sep",
  ["Spelling", <g key="7"><path d="M1 3h7M4.500 1v2M2 5h5l-2 2v3H3M9 9l2.500-7L14 9M10 7h4" stroke="#202020" fill="none" /><path d="M4 10l4 4 6-5" stroke="#3870d0" strokeWidth="2.500" fill="none" /></g>],
  ["Research", <g key="8"><path d="M1 2h4v12H1z" fill="#7068c0" stroke="#404080" /><path d="M5 4h4v10H5z" fill="#d8a040" stroke="#705020" /><circle cx="10.500" cy="7" r="3.500" fill="#d0ecf8" stroke="#506888" /><path d="M12 10l3 4" stroke="#b07030" strokeWidth="2" /></g>],
  "sep",
  ["Cut", <g key="9" fill="none"><path d="M5 1l5 9M11 1L6 10" stroke="#5070a0" strokeWidth="1.500" /><circle cx="4.500" cy="12" r="2" stroke="#2848b0" strokeWidth="1.500" /><circle cx="11" cy="12" r="2" stroke="#2848b0" strokeWidth="1.500" /></g>],
  ["Copy", <g key="10"><Page x={1} y={1} w={9} h={10} /><Page x={6} y={5} w={9} h={10} /><path d="M8 9h4M8 11h5M8 13h5" stroke="#5078d0" /></g>],
  ["Paste", <g key="11"><path d="M1 3h11v11H1z" fill="#d89820" stroke="#805010" /><path d="M4 1h5v3H4z" fill="#c8c8c8" stroke="#606060" /><path d="M6 7h9v7H6z" fill="#fff" stroke="#5068a8" /><path d="M8 9h5M8 11h5" stroke="#5078d0" /></g>],
  "drop",
  ["Format painter", <g key="12"><path d="M15 1l-5 5" stroke="#5060a0" strokeWidth="3" /><path d="M2 7l6-2 4 4-3 6z" fill="#f8e070" stroke="#a08020" /><path d="M8 4l4 4" stroke="#404868" strokeWidth="2" /></g>],
  "sep",
  ["Undo", <path key="13" d="M3 3v5h5M3 8q7-7 10-2 1 5-4 8" fill="none" stroke="#a8a8a8" strokeWidth="2.500" />],
  "grey",
  ["Redo", <path key="14" d="M13 3v5H8M13 8Q6 1 3 6q-1 5 4 8" fill="none" stroke="#b0b0b0" strokeWidth="2.500" />],
  "grey",
  "sep",
  ["Hyperlink", <g key="15"><circle cx="7" cy="6" r="5.500" fill="#3888c8" stroke="#205080" /><path d="M4 3q3-2 4 1t-3 4q-3-2-1-5zM9 6l3-1-1 4z" fill="#60c050" /><path d="M4 12.500h4M9 12.500h5" stroke="#6080b0" strokeWidth="4" strokeLinecap="round" /><path d="M4 12.500h10" stroke="#fff" strokeWidth="1.500" /></g>],
];

const Lines = ({ a }: { a: "l" | "c" | "r" }) => (
  <svg width="15" height="13" viewBox="0 0 15 13" aria-hidden>
    {[0, 1, 2, 3, 4, 5].map((i) => {
      const w = i % 2 ? 9 : 14;
      const x = a === "l" ? 0 : a === "c" ? (14 - w) >> 1 : 14 - w;
      return <path key={i} d={`M${x} ${i * 2 + 1}.500h${w}`} stroke="#000" />;
    })}
  </svg>
);

const cols: [string, number][] = [["B", 65], ["C", 87], ["D", 109], ["E", 99], ["F", 93], ["G", 77], ["H", 81], ["I", 69], ["J", 97], ["K", 86]];

function Sheet() {
  return (
    <Frame $l={161} $t={532} $r={375} $b={-4}>
      <TitleBar>
        <svg width="16" height="16" viewBox="0 0 16 16" aria-hidden>
          <path d="M.5.5h15v15H.5z" fill="#e8f4e8" stroke="#287838" />
          <path d="M3 4l7 8M10 4l-7 8" stroke="#208038" strokeWidth="2.500" />
          <path d="M11 4h3M11 7h3M11 10h3" stroke="#60a870" />
        </svg>
        <TitleText>
          Microsoft Excel - CAM<span>中心</span>P3CAM<span>制作规范</span>.xls&nbsp; [<span>只读</span>]
        </TitleText>
      </TitleBar>
      <SheetTools>
        <Grip />
        {bar.map((b, i) =>
          b === "sep" ? (
            <Sep key={i} />
          ) : b === "drop" || b === "grey" ? (
            <SheetButton key={i} $w={11} aria-label="More options" disabled={b === "grey"}>
              <svg width="9" height="16" viewBox="0 0 9 16" aria-hidden><path d="M2 7h6L5 10z" fill={b === "grey" ? "#a0a0a0" : "#000"} /></svg>
            </SheetButton>
          ) : (
            <SheetButton key={i} aria-label={b[0] as string}><Icon16>{b[1]}</Icon16></SheetButton>
          )
        )}
        <More aria-label="Toolbar options">
          <svg width="9" height="21" viewBox="0 0 9 21" aria-hidden>
            <path d="M1 1l2 2-2 2M5 1l2 2-2 2M2 14h6" stroke="#000" fill="none" />
            <path d="M2 16h6l-3 3z" />
          </svg>
        </More>
        <Grip />
        <Combo $w={151}>
          <ComboSelect aria-label="Font"><option>宋体</option></ComboSelect>
          <Caret />
        </Combo>
        <Combo $w={45}>
          <ComboSelect aria-label="Font size"><option>10</option></ComboSelect>
          <Caret />
        </Combo>
        <Sep />
        <SheetButton aria-label="Bold">B</SheetButton>
        <SheetButton aria-label="Italic"><em>I</em></SheetButton>
        <SheetButton aria-label="Underline"><u>U</u></SheetButton>
        <Sep />
        <SheetButton $on aria-label="Align left"><Lines a="l" /></SheetButton>
        <SheetButton aria-label="Align center"><Lines a="c" /></SheetButton>
        <SheetButton aria-label="Align right"><Lines a="r" /></SheetButton>
      </SheetTools>
      <SheetMenu>
        <Grip />
        <svg width="17" height="16" viewBox="0 0 17 16" aria-hidden>
          <path d="M5.500 1.500h8l3 3v11h-11z" fill="#fff" stroke="#5068a8" />
          <path d="M1 3h9v9H1z" fill="#d8f0d8" stroke="#287838" />
          <path d="M3 5l5 5M8 5l-5 5" stroke="#208038" strokeWidth="1.500" />
        </svg>
        {["文件(F)", "编辑(E)", "视图(V)", "插入(I)", "格式(O)", "工具(T)", "数据(D)", "窗口(W)", "帮助(H)"].map((t) => (
          <a href="#menu" key={t}>
            {t.slice(0, 2)}
            <Latin $size={10}>(<u>{t[3]}</u>)</Latin>
          </a>
        ))}
      </SheetMenu>
      <FormulaRow>
        <NameBox aria-label="Cell name" defaultValue="D93" />
        <FormulaTools><Caret /><span>fx</span></FormulaTools>
        <Formula><Mixed size={13} text="金属化半孔孔径（成品孔）≥0.3MM" /></Formula>
      </FormulaRow>
      <SheetArea>
        <Grid>
          <colgroup>
            <col width={35} />
            {cols.map(([n, w]) => <col key={n} width={w} />)}
          </colgroup>
          <thead>
            <tr>
              <HeadTh />
              {cols.map(([n]) => <HeadTh key={n}>{n}</HeadTh>)}
            </tr>
          </thead>
          <tbody>
            <tr><RowTh $h={18}>1</RowTh><Cell colSpan={10} $thick /></tr>
            <tr>
              <RowTh $h={18}>2</RowTh>
              <Cell colSpan={10} rowSpan={2}><SheetTitle><Mixed size={26} bold text="5.3 钻孔" /></SheetTitle></Cell>
            </tr>
            <tr><RowTh $h={18}>3</RowTh></tr>
            <tr>
              <RowTh $h={26}>4</RowTh>
              <Cell rowSpan={2}>内容</Cell>
              <Cell colSpan={6}>工程制作</Cell>
              <Cell colSpan={3}>生产能力</Cell>
            </tr>
            <tr>
              <RowTh $h={21}>5</RowTh>
              <Cell>制作项目</Cell>
              <Cell colSpan={5}>制作要求及说明</Cell>
              <Cell colSpan={2}>常规</Cell>
              <Cell />
            </tr>
            <tr>
              <RowTh $h={85}>135</RowTh>
              <Cell rowSpan={2}><Clip $h={138}><CutTop $h={7}><span>制作方法</span></CutTop></Clip></Cell>
              <Cell $left><Mixed text="c、内单" /></Cell>
              <Cell $left colSpan={7}>
                <CutTop $h={84}>
                  <span>对于国内单无特殊说明时，</span>
                  <span><Mixed text="a、  顾客设计NPTH孔对应线路层位置的焊盘宽度：若单边≥10MIL，按二钻处理，单边削铜6MIL，极限" /></span>
                  <span><Mixed text="5mil。保证剩余最小5MIL铜环，孤立位置补偿至剩余8mil铜环；若单边＜10MIL，按删除此孔位相应的铜处" /></span>
                  <span>理。</span>
                  <span><Mixed text="b、顾客设计NPTH孔对应线路层位置为大铜皮，且将图形打成骨架有焊盘，处理方式参照a。" /></span>
                  <span><Mixed text="c、顾客设计NPTH孔对应线路层位置为大铜皮，且将图形打成骨架无焊盘，则按规范正常掏铜，保证不露铜。" /></span>
                </CutTop>
              </Cell>
              <Cell />
            </tr>
            <tr>
              <RowTh $h={53}>136</RowTh>
              <Cell $left>
                <Clip $h={52} $mid>
                  <span><Mixed text="d、顾客设计" /></span>
                  <span>有焊盘露铜</span>
                </Clip>
              </Cell>
              <Cell $left colSpan={7}>
                <Clip $h={52} $mid>
                  <span><Mixed text="1 、对于NPTH在外层设计有焊盘（焊盘直径≥NPTH孔径+10mil），且顾客允许NPTH外层露铜的文件，工程" /></span>
                  <span><Mixed text="制作时将NPTH放二钻，并采用比NPTH小2mil形式掏铜，以免二钻时焊盘脱离。" /></span>
                </Clip>
              </Cell>
              <Cell />
            </tr>
          </tbody>
        </Grid>
      </SheetArea>
    </Frame>
  );
}

/* ---------- text document window ---------- */

const PadMenu = styled.nav`
  flex: none;
  display: flex;
  gap: 11px;
  height: 19px;
  padding-left: 5px;
  background: ${c.face};
  font: normal 12px/17px ${title};
  & > a { white-space: nowrap; }
`;
const Paper = styled.div`
  flex: 1;
  margin-left: 1px;
  padding: 5px 0 0 14px;
  background: #fff;
  border: 1px solid #404040;
  border-width: 1px 0 0 1px;
  font: normal 13px/17px ${cjk};
  overflow: hidden;
`;
const Line = styled.p`
  height: 17px;
  margin: 0;
  white-space: pre;
`;

const d15 = "—".repeat(15);
const d14 = "—".repeat(14);
const doc = [
  "成品板厚(MM)：0.76",
  "1PNL=2 Units",
  d15,
  "单只尺寸(MM)：193.02 X 319.50",
  "拼版尺寸(Inch)：16.00 X 18.00",
  "开料利用率：66.39% (利用率低于70%必须经过主管确认)",
  d15,
  "成品最小SMT宽度(mil)：19.700",
  d15,
  "cs铜面积：35.29",
  "ss铜面积：41.39",
  "孔铜面积(含板面积)：288.31",
  "孔铜面积：0.89",
  d14,
  "cs沉金面积：2.75",
  "ss沉金面积：5.13自动计算沉金面积只适合普通沉金及沉金+金手指工艺",
  "其它混合表面工艺或有PTH阶梯孔/槽时,请手动进行沉金面积计算！！",
  "—————内层信息—————",
  "sig2t铜面积：78%",
  "sig3b铜面积：78%",
  d14,
  "层压管位长(MM)：444.50",
  "层压管位宽(MM)：266.70",
  d14,
  "此板有以下字符层：",
  "4a9v803ia0.to",
  "4a9v803ia0.bo",
  d14,
  "此板工艺流程：图镀流程",
  "PTHROU金属化铣孔,请注意增加流程、检查阻焊开通窗",
  "        请检查周期格式及点数",
];

function Pad() {
  return (
    <Frame $l={982} $t={306} $r={-4} $b={-4}>
      <TitleBar $active>
        <svg width="15" height="16" viewBox="0 0 15 16" aria-hidden>
          <path d="M2 2h11v13H2z" fill="#fff" stroke="#000" />
          <path d="M4 5.500h7M4 7.500h7M4 9.500h7M4 11.500h5" stroke="#000" />
          <path d="M3 0v3M6 0v3M9 0v3M12 0v3" stroke="#fff" />
        </svg>
        <TitleText>4a9v803ia0.txt - <span>写字板</span></TitleText>
      </TitleBar>
      <PadMenu>
        {["文件(F)", "编辑(E)", "查看(V)", "插入(I)", "格式(O)", "帮助(H)"].map((t) => (
          <a href="#menu" key={t}>
            {t.slice(0, 3)}<u>{t[3]}</u>)
          </a>
        ))}
      </PadMenu>
      <Paper>
        {doc.map((t, i) => <Line key={i}><Mixed text={t} /></Line>)}
      </Paper>
    </Frame>
  );
}

/* ---------- input method bar ---------- */

const Ime = styled.div`
  position: absolute;
  right: 0;
  bottom: 0;
  display: flex;
  align-items: center;
  justify-content: space-between;
  width: 148px;
  height: 19px;
  padding: 0 8px 0 1px;
  background: #f4f9fd;
  border: 1px solid #a8c8e0;
  border-width: 1px 0 0 1px;
  color: #4a90d0;
  font: bold 15px/18px ${cjk};
`;

function ImeBar() {
  return (
    <Ime>
      <svg width="18" height="18" viewBox="0 0 18 18" aria-hidden>
        <path d="M1 3l14-2 2 14-14 2z" fill="#e85020" />
        <path d="M13 5Q6 3 5.500 6t6 3Q13 13 5 13" fill="none" stroke="#fff" strokeWidth="2.500" />
      </svg>
      <span>中</span>
      <svg width="14" height="16" viewBox="0 0 14 16" aria-hidden><path d="M9 2q5 6 0 10-4 3-8 0 9 0 8-10z" fill="#4a90d0" /></svg>
      <svg width="12" height="16" viewBox="0 0 12 16" aria-hidden>
        <circle cx="4" cy="5" r="2" fill="none" stroke="#4a90d0" strokeWidth="1.500" />
        <path d="M9 9q2 3-2 5" stroke="#4a90d0" strokeWidth="2" fill="none" />
      </svg>
      <svg width="18" height="14" viewBox="0 0 18 14" aria-hidden>
        <path d="M1 2h16v10H1z" fill="none" stroke="#4a90d0" strokeWidth="1.500" />
        <path d="M3 5h12M3 7.500h12" stroke="#4a90d0" strokeWidth="1.500" strokeDasharray="2 1" />
        <path d="M5 10h8" stroke="#4a90d0" strokeWidth="1.500" />
      </svg>
      <svg width="12" height="14" viewBox="0 0 12 14" aria-hidden>
        <circle cx="6" cy="4" r="3" fill="#a8a8a8" /><path d="M1 13q0-6 5-6t5 6z" fill="#a8a8a8" />
      </svg>
      <svg width="15" height="15" viewBox="0 0 15 15" aria-hidden>
        <path d="M2 13l7-7" stroke="#4a90d0" strokeWidth="3" />
        <path d="M13 5a3.500 3.500 0 1 1-4-4l-1 3 2 2z" fill="#4a90d0" stroke="#4a90d0" />
      </svg>
    </Ime>
  );
}

export default function App() {
  return (
    <>
      <Global />
      <Desktop>
        <Editor />
        <Frame $l={1000} $r={-3} $t={80} $b={8}>
          <TitleBar>
            <TitleText />
            <CaptionButton aria-label="Close popup"><XGlyph /></CaptionButton>
          </TitleBar>
          <PopupBody>
            <PopupField />
            <PopupScroll><Scroll /></PopupScroll>
          </PopupBody>
        </Frame>
        <ResultsViewer />
        <Histogram />
        <Sheet />
        <Pad />
        <ImeBar />
      </Desktop>
    </>
  );
}
